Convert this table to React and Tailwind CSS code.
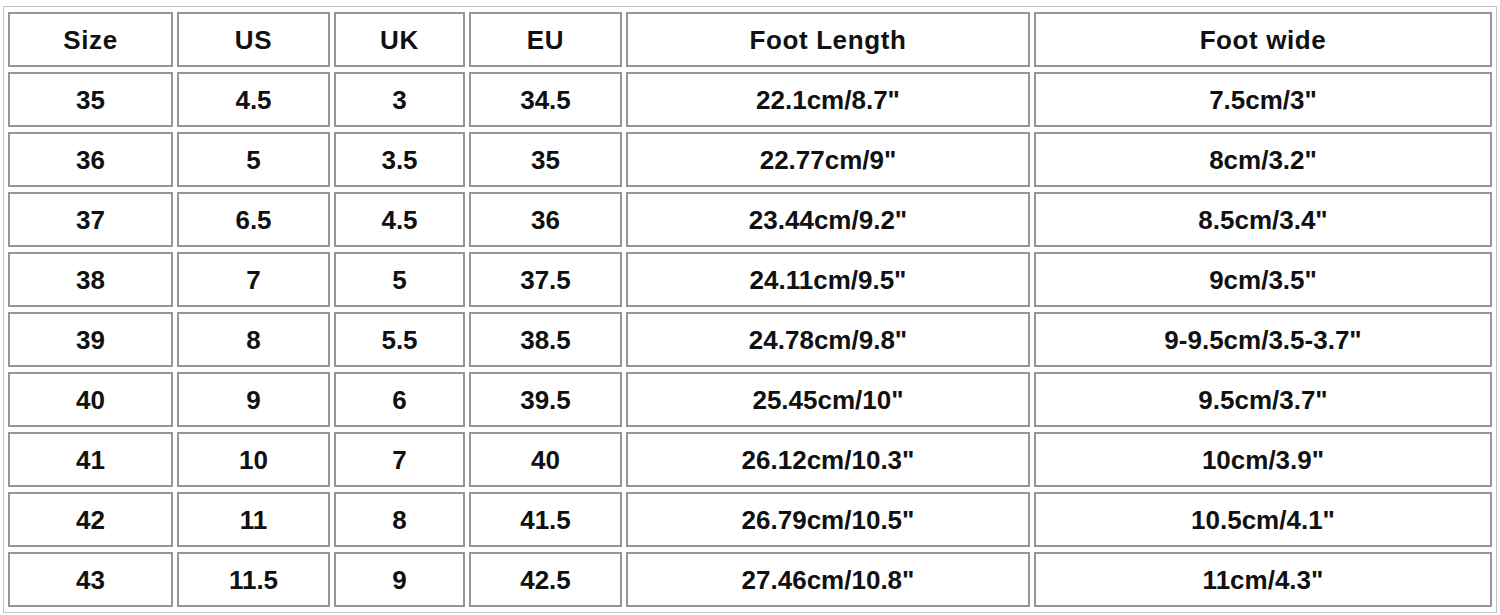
const headers = ['Size', 'US', 'UK', 'EU', 'Foot Length', 'Foot wide'];
const widths = ['w-[165px]', 'w-[153px]', 'w-[131px]', 'w-[153px]', 'w-[404px]', 'w-[458px]'];

const rows = [
  ['35', '4.5', '3', '34.5', '22.1cm/8.7"', '7.5cm/3"'],
  ['36', '5', '3.5', '35', '22.77cm/9"', '8cm/3.2"'],
  ['37', '6.5', '4.5', '36', '23.44cm/9.2"', '8.5cm/3.4"'],
  ['38', '7', '5', '37.5', '24.11cm/9.5"', '9cm/3.5"'],
  ['39', '8', '5.5', '38.5', '24.78cm/9.8"', '9-9.5cm/3.5-3.7"'],
  ['40', '9', '6', '39.5', '25.45cm/10"', '9.5cm/3.7"'],
  ['41', '10', '7', '40', '26.12cm/10.3"', '10cm/3.9"'],
  ['42', '11', '8', '41.5', '26.79cm/10.5"', '10.5cm/4.1"'],
  ['43', '11.5', '9', '42.5', '27.46cm/10.8"', '11cm/4.3"'],
];

const cell = 'h-[55px] p-0 border-2 border-[#969696] text-center align-middle';

export default function App() {
  return (
    <div className="w-[1500px] h-[615px] bg-white overflow-hidden pt-[6px] pl-[3px]">
      <table
        className="table-fixed w-[1494px] border-separate border-spacing-x-[4px] border-spacing-y-[5px] border border-[#c4c4c4] text-[#111] font-bold text-[26px] leading-none"
        style={{ fontFamily: '"Liberation Sans", Arial, sans-serif' }}
      >
        <thead>
          <tr>
            {headers.map((h, i) => (
              <th key={h} className={`${cell} ${widths[i]} font-bold tracking-[0.6px]`}>
                {h}
              </th>
            ))}
          </tr>
        </thead>
        <tbody>
          {rows.map((r) => (
            <tr key={r[0]}>
              {r.map((v, i) => (
                <td key={i} className={cell}>
                  {v}
                </td>
              ))}
            </tr>
          ))}
        </tbody>
      </table>
    </div>
  );
}
